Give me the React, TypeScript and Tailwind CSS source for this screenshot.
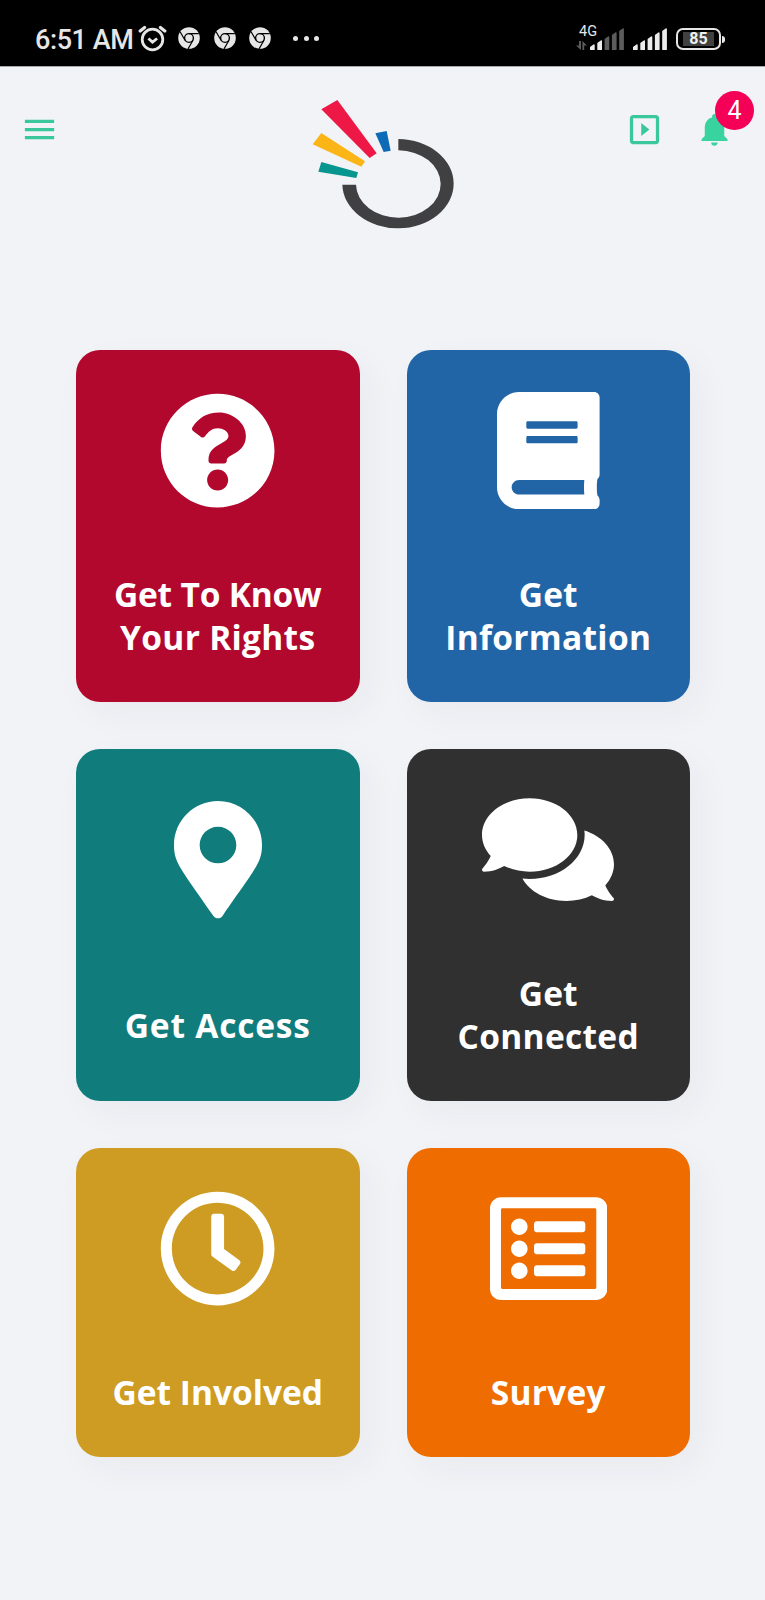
import { FaBook, FaComments, FaMapMarkerAlt, FaQuestionCircle, FaRegClock, FaRegListAlt } from 'react-icons/fa';
import { MdMenu, MdNotifications, MdSlideshow } from 'react-icons/md';
import type { IconType } from 'react-icons';

type Tile = {
    lines: { text: string; tracking: string }[];
    icon: IconType;
    iconWidth: string;
    color: string;
};

const tiles: Tile[] = [
    {
        lines: [
            { text: 'Get To Know', tracking: 'tracking-[-0.2px]' },
            { text: 'Your Rights', tracking: 'tracking-[0.3px]' },
        ],
        icon: FaQuestionCircle,
        iconWidth: 'w-[117.3px]',
        color: 'bg-[#b2082e]',
    },
    {
        lines: [
            { text: 'Get', tracking: 'tracking-[0.1px]' },
            { text: 'Information', tracking: 'tracking-[0.3px]' },
        ],
        icon: FaBook,
        iconWidth: 'w-[102.6px]',
        color: 'bg-[#2265a7]',
    },
    {
        lines: [{ text: 'Get Access', tracking: 'tracking-[0.8px]' }],
        icon: FaMapMarkerAlt,
        iconWidth: 'w-[88px]',
        color: 'bg-[#117c7c]',
    },
    {
        lines: [
            { text: 'Get', tracking: 'tracking-[0.1px]' },
            { text: 'Connected', tracking: 'tracking-[0.3px]' },
        ],
        icon: FaComments,
        iconWidth: 'w-[132px]',
        color: 'bg-[#303030]',
    },
    {
        lines: [{ text: 'Get Involved', tracking: 'tracking-[0px]' }],
        icon: FaRegClock,
        iconWidth: 'w-[117.3px]',
        color: 'bg-[#ce9c23]',
    },
    {
        lines: [{ text: 'Survey', tracking: 'tracking-[0.2px]' }],
        icon: FaRegListAlt,
        iconWidth: 'w-[117.3px]',
        color: 'bg-[#ef6c00]',
    },
];

function AlarmIcon() {
    return (
        <svg width="29" height="27" viewBox="0 0 29 27" fill="none" stroke="#e6e6e6">
            <circle cx="14.5" cy="14.5" r="10.3" strokeWidth="2.8" />
            <path d="M2.2 6 6.6 2.4M26.8 6 22.4 2.4" strokeWidth="3.2" strokeLinecap="round" />
            <path d="m10.4 13.5 4.1 3.6 4.6-3.6" strokeWidth="2.8" />
        </svg>
    );
}

function ChromeIcon() {
    return (
        <svg width="22" height="22" viewBox="0 0 22 22" fill="none">
            <circle cx="11" cy="11" r="10.8" fill="#e6e6e6" />
            <circle cx="11" cy="11" r="4.4" stroke="#000" strokeWidth="1.4" />
            <path d="M11 6.6h9.8M7 13.3 2.1 4.8M15 13.3l-4.9 8.5" stroke="#000" strokeWidth="1.2" />
        </svg>
    );
}

function SignalIcon({ level }: { level: number }) {
    const heights = [6, 10, 14, 18, 22];

    return (
        <svg width="34" height="22" viewBox="0 0 34 22">
            {heights.map((h, i) => (
                <path
                    key={h}
                    d={`M${i * 7.3} 21v${-(h - 4)}l3.4-2.6q1.3-.5 1.3.8v${h - 1.7}q0 .5-.5.5h-3.7q-.5 0-.5-.5z`}
                    fill={i < level ? '#ececec' : '#5c5c5c'}
                />
            ))}
        </svg>
    );
}

function StatusBar() {
    return (
        <div className="flex h-[66px] items-start justify-between bg-black pl-[35px] pr-[40px] font-['Roboto',sans-serif] text-[#e6e6e6]">
            <div className="mt-[25px] flex h-[26px] items-center">
                <span className="w-[103px] whitespace-nowrap pt-[3px] text-[27px] font-medium leading-[26px] tracking-[-0.4px]">
                    6:51 AM
                </span>
                <AlarmIcon />
                <div className="ml-[11px] flex gap-[13.5px]">
                    <ChromeIcon />
                    <ChromeIcon />
                    <ChromeIcon />
                </div>
                <div className="ml-[22px] flex gap-[5.5px]">
                    <span className="size-[5px] rounded-full bg-[#e6e6e6]" />
                    <span className="size-[5px] rounded-full bg-[#e6e6e6]" />
                    <span className="size-[5px] rounded-full bg-[#e6e6e6]" />
                </div>
            </div>

            <div className="mt-[28px] flex h-[22px] items-center">
                <div className="relative flex items-end">
                    <span className="absolute -top-[3px] left-[3px] text-[14.5px] leading-none">4G</span>
                    <svg width="11" height="9" viewBox="0 0 11 9" className="mr-[3px]" fill="#5c5c5c">
                        <path d="M3 0h2v9L0 4.5h3zM6.4 9V0L11 4.5H8.2V9z" />
                    </svg>
                    <SignalIcon level={2} />
                </div>
                <div className="ml-[9px]">
                    <SignalIcon level={5} />
                </div>
                <div className="ml-[9px] flex h-[22px] w-[45px] items-center justify-center rounded-[7px] border-2 border-[#e6e6e6]">
                    <span className="flex h-[14px] w-[31px] items-center justify-center bg-[#404040] text-[16px] font-bold leading-none text-[#f0f0f0]">
                        85
                    </span>
                </div>
                <span className="ml-px h-[7px] w-[3px] rounded-r-sm bg-[#e6e6e6]" />
            </div>
        </div>
    );
}

function Logo() {
    return (
        <svg width="170" height="150" viewBox="0 0 510 450" className="blur-[0.4px]">
            <path d="M64 58 112 30 230 190 209 204Z" fill="#ed1846" />
            <path d="M64 129 38 163 184 230 195 214Z" fill="#fbb516" />
            <path d="M64 216 55 245 169 264 174 247Z" fill="#079590" />
            <path d="M226 130 260 123 272 182 251 186Z" fill="#0c6ab6" />
            <path d="M295 147A167 134 0 1 1 127 284H168A127 101 0 1 0 295 181Z" fill="#404042" />
        </svg>
    );
}

function Header() {
    return (
        <header className="flex h-[284px] items-start justify-between border-t border-[#a8a8a8] pl-[19.5px] pr-[31px] text-[#3bc79c]">
            <button type="button" aria-label="Menu" className="mt-[43px]">
                <MdMenu size={39} />
            </button>
            <div className="ml-[241.5px] mt-[23px]">
                <Logo />
            </div>
            <div className="ml-auto mt-[43px] flex gap-[31px]">
                <button type="button" aria-label="Videos">
                    <MdSlideshow size={39} />
                </button>
                <button type="button" aria-label="Notifications" className="relative">
                    <MdNotifications size={39} color="#38d39f" />
                    <span className="absolute -right-[20px] -top-[19.5px] flex size-[39px] items-center justify-center rounded-full bg-[#f50057] font-['Roboto',sans-serif] text-[25px] leading-none text-white">
                        4
                    </span>
                </button>
            </div>
        </header>
    );
}

function TileCard({ tile }: { tile: Tile }) {
    const Icon = tile.icon;

    return (
        <button
            type="button"
            className={`flex flex-col items-center justify-around rounded-[24px] pb-[42px] pt-[41px] text-white shadow-[10px_12px_36px_rgba(40,50,70,0.045)] ${tile.color}`}
        >
            <Icon className={`mb-[63px] h-[117.3px] ${tile.iconWidth}`} />
            <span className="flex flex-col text-center text-[33.5px] font-bold leading-[43.3px]">
                {tile.lines.map((line) => (
                    <span key={line.text} className={`whitespace-nowrap ${line.tracking}`}>
                        {line.text}
                    </span>
                ))}
            </span>
        </button>
    );
}

export default function App() {
    return (
        <div className="min-h-[1600px] w-[765px] overflow-hidden bg-[#f1f3f7] font-['Open_Sans',sans-serif]">
            <StatusBar />
            <Header />
            <main className="grid grid-cols-2 grid-rows-[352px_352px_309px] gap-[47px] pl-[76px] pr-[75px]">
                {tiles.map((tile) => (
                    <TileCard key={tile.color} tile={tile} />
                ))}
            </main>
        </div>
    );
}
